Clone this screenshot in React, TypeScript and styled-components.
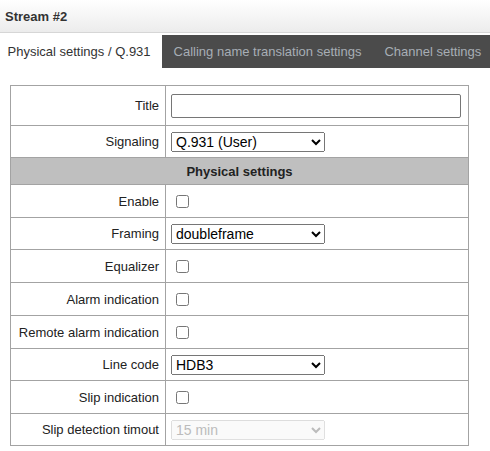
import React from "react";
import styled, { createGlobalStyle } from "styled-components";

const GlobalStyle = createGlobalStyle`
  html, body { margin: 0; padding: 0; background: #fff; }
  body { font-family: "Liberation Sans", Arial, sans-serif; font-size: 13px; color: #222; }
`;

const Page = styled.div`
  width: 490px;
  height: 451px;
  overflow: hidden;
  background: #fff;
`;

const Header = styled.div`
  height: 33px;
  box-sizing: border-box;
  border-bottom: 1px solid #d6d6d6;
  background: linear-gradient(to bottom, #ffffff 0%, #ececec 100%);
  display: flex;
  align-items: center;
  padding-left: 5px;
  font-weight: bold;
  font-size: 13px;
  color: #333;
`;

const TabBar = styled.div`
  margin-top: 2px;
  height: 33px;
  display: flex;
  background: #4b4b4b;
  white-space: nowrap;
`;

const Tab = styled.div<{ $active?: boolean }>`
  display: flex;
  align-items: center;
  padding: 0 11.5px 0 ${(p) => (p.$active ? "7.5px" : "11.5px")};
  background: ${(p) => (p.$active ? "#fff" : "transparent")};
  color: ${(p) => (p.$active ? "#333" : "#a7aeb5")};
  font-size: 13px;
  flex-shrink: 0;
`;

const Form = styled.div`
  margin: 17px 0 0 10px;
  width: 459px;
  box-sizing: border-box;
  display: grid;
  grid-template-columns: 155px 303px;
  border-top: 1px solid #a3a3a3;
  border-left: 1px solid #a3a3a3;
`;

const Cell = styled.div<{ $h: number }>`
  height: ${(p) => p.$h}px;
  border-right: 1px solid #a3a3a3;
  border-bottom: 1px solid #a3a3a3;
  display: flex;
  align-items: center;
`;

const Label = styled(Cell)`
  justify-content: flex-end;
  padding-right: 6px;
  color: #222;
  font-size: 13px;
`;

const Value = styled(Cell)`
  padding-left: 5px;
`;

const Section = styled(Cell)`
  grid-column: 1 / span 2;
  justify-content: center;
  background: #bfbfbf;
  font-weight: bold;
  color: #222;
`;

const TextInput = styled.input`
  box-sizing: border-box;
  width: 290px;
  height: 24px;
  margin: 0;
  border: 1px solid #767676;
  border-radius: 2px;
  font-family: "Liberation Sans", Arial, sans-serif;
  font-size: 14px;
`;

const Select = styled.select`
  box-sizing: border-box;
  width: 154px;
  height: 20px;
  margin: 0;
  font-family: "Liberation Sans", Arial, sans-serif;
  font-size: 14px;
  color: #000;
  &:disabled { color: #a0a0a0; }
`;

const Check = styled.input`
  width: 13px;
  height: 13px;
  margin: 0 0 0 5px;
`;

type Row =
  | { kind: "check"; label: string }
  | { kind: "select"; label: string; options: string[]; disabled?: boolean };

const rows: Row[] = [
  { kind: "check", label: "Enable" },
  { kind: "select", label: "Framing", options: ["doubleframe", "multiframe"] },
  { kind: "check", label: "Equalizer" },
  { kind: "check", label: "Alarm indication" },
  { kind: "check", label: "Remote alarm indication" },
  { kind: "select", label: "Line code", options: ["HDB3", "AMI"] },
  { kind: "check", label: "Slip indication" },
  { kind: "select", label: "Slip detection timout", options: ["15 min"], disabled: true },
];

export default function App() {
  return (
    <Page>
      <GlobalStyle />
      <Header>Stream #2</Header>
      <TabBar>
        <Tab $active>Physical settings / Q.931</Tab>
        <Tab>Calling name translation settings</Tab>
        <Tab>Channel settings</Tab>
      </TabBar>
      <Form>
        <Label $h={39}>Title</Label>
        <Value $h={39}>
          <TextInput type="text" defaultValue="" />
        </Value>
        <Label $h={31}>Signaling</Label>
        <Value $h={31}>
          <Select defaultValue="Q.931 (User)">
            <option>Q.931 (User)</option>
            <option>Q.931 (Network)</option>
          </Select>
        </Value>
        <Section $h={26}>Physical settings</Section>
        {rows.map((r) => {
          const h = r.kind === "check" ? 32 : 31;
          return (
            <React.Fragment key={r.label}>
              <Label $h={h}>{r.label}</Label>
              <Value $h={h}>
                {r.kind === "check" ? (
                  <Check type="checkbox" />
                ) : (
                  <Select disabled={r.disabled} defaultValue={r.options[0]}>
                    {r.options.map((o) => (
                      <option key={o}>{o}</option>
                    ))}
                  </Select>
                )}
              </Value>
            </React.Fragment>
          );
        })}
      </Form>
    </Page>
  );
}
